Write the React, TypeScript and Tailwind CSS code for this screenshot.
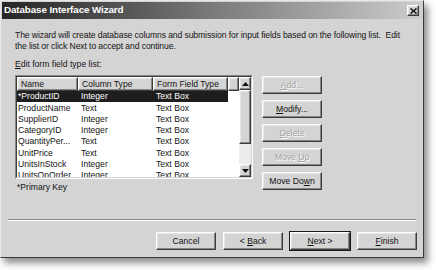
import type { ReactNode } from "react";

const rows = [
  ["*ProductID", "Integer", "Text Box"],
  ["ProductName", "Text", "Text Box"],
  ["SupplierID", "Integer", "Text Box"],
  ["CategoryID", "Integer", "Text Box"],
  ["QuantityPer...", "Text", "Text Box"],
  ["UnitPrice", "Text", "Text Box"],
  ["UnitsInStock", "Integer", "Text Box"],
  ["UnitsOnOrder", "Integer", "Text Box"],
];

const raised =
  "border border-t-white border-l-white border-r-[#3c3c3c] border-b-[#3c3c3c] shadow-[inset_-1px_-1px_0_#858585,inset_1px_1px_0_#e6e6e6]";

const Button = ({
  children,
  disabled,
  isDefault,
}: {
  children: ReactNode;
  disabled?: boolean;
  isDefault?: boolean;
}) => (
  <div
    className={`w-[60px] h-[18px] bg-[#d4d4d4] flex items-center justify-center ${
      isDefault ? "outline outline-1 outline-[#1a1a1a]" : ""
    } ${raised} ${
      disabled ? "text-[#a3a3a3] [text-shadow:1px_1px_0_#ffffff]" : "text-[#111]"
    }`}
  >
    {children}
  </div>
);

const HeaderCell = ({ children, w }: { children?: ReactNode; w: string }) => (
  <div className={`${w} h-[14px] bg-[#d4d4d4] flex items-center pl-[3px] ${raised}`}>
    {children}
  </div>
);

const Arrow = ({ up }: { up?: boolean }) => (
  <div className={`h-[13px] bg-[#d4d4d4] flex items-center justify-center ${raised}`}>
    <svg width="7" height="4" viewBox="0 0 7 4">
      {up ? <polygon points="3.5,0 7,4 0,4" fill="#111" /> : <polygon points="0,0 7,0 3.5,4" fill="#111" />}
    </svg>
  </div>
);

export default function App() {
  return (
    <div className="w-[436px] h-[270px] bg-white font-['Liberation_Sans',Arial,sans-serif] text-[8.6px] text-[#141414]">
      <div className="w-[424px] h-[258px] bg-[#d4d4d4] border border-l-[#e8e8e8] border-t-[#e8e8e8] border-r-[#3a3a3a] border-b-[#3a3a3a] shadow-[4px_5px_7px_rgba(0,0,0,0.45)] flex flex-col">
        {/* Title bar */}
        <div className="h-[17px] mx-[1px] mt-[1px] bg-gradient-to-r from-[#262626] via-[#7a7a7a] to-[#cdcdcd] flex items-center justify-between pl-[2px] pr-[3px]">
          <span className="text-white font-bold text-[9.8px] tracking-[-0.1px]">Database Interface Wizard</span>
          <div className={`w-[12px] h-[11px] bg-[#d4d4d4] flex items-center justify-center ${raised}`}>
            <svg width="7" height="6" viewBox="0 0 7 6">
              <path d="M0.5 0.5 L6.5 5.5 M6.5 0.5 L0.5 5.5" stroke="#111" strokeWidth="1.5" />
            </svg>
          </div>
        </div>

        {/* Body */}
        <div className="pl-[14px] pt-[11px]">
          <p className="leading-[11px] whitespace-nowrap tracking-[-0.1px]">
            The wizard will create database columns and submission for input fields based on the following list.&nbsp; Edit
            <br />
            the list or click Next to accept and continue.
          </p>
          <p className="mt-[7px] leading-[11px]">
            <u>E</u>dit form field type list:
          </p>

          <div className="mt-[5px] flex items-start gap-[9px]">
            <div className="flex flex-col">
              {/* List box */}
              <div className="w-[238px] h-[104px] border border-t-[#858585] border-l-[#858585] border-r-white border-b-white">
                <div className="w-full h-full border border-t-[#3c3c3c] border-l-[#3c3c3c] border-r-[#d4d4d4] border-b-[#d4d4d4] bg-white flex overflow-hidden">
                  <div className="flex-1 flex flex-col">
                    <div className="flex">
                      <HeaderCell w="w-[61px]">Name</HeaderCell>
                      <HeaderCell w="w-[75px]">Column Type</HeaderCell>
                      <HeaderCell w="w-[75px]">Form Field Type</HeaderCell>
                      <HeaderCell w="flex-1" />
                    </div>
                    {rows.map((r, i) => (
                      <div key={r[0]} className="flex h-[11.3px] items-center shrink-0">
                        <div
                          className={`flex w-[211px] h-full items-center ${
                            i === 0 ? "bg-[#1e1e1e] text-white" : ""
                          }`}
                        >
                          <span className="w-[61px] pl-[1px] whitespace-nowrap">{r[0]}</span>
                          <span className="w-[75px] pl-[3px]">{r[1]}</span>
                          <span className="w-[75px] pl-[3px]">{r[2]}</span>
                        </div>
                      </div>
                    ))}
                  </div>
                  {/* Scrollbar */}
                  <div className="w-[12px] flex flex-col bg-[#ececec]">
                    <Arrow up />
                    <div className={`h-[54px] bg-[#d4d4d4] ${raised}`} />
                    <div className="flex-1" />
                    <Arrow />
                  </div>
                </div>
              </div>
              <p className="mt-[3px] leading-[11px] pl-[2px]">*Primary Key</p>
            </div>

            {/* Side buttons */}
            <div className="flex flex-col gap-[6px] pt-[1px]">
              <Button disabled>
                <span>
                  <u>A</u>dd...
                </span>
              </Button>
              <Button>
                <span>
                  <u>M</u>odify...
                </span>
              </Button>
              <Button disabled>
                <span>
                  <u>D</u>elete
                </span>
              </Button>
              <Button disabled>
                <span>
                  Move <u>U</u>p
                </span>
              </Button>
              <Button>
                <span>
                  Move Do<u>w</u>n
                </span>
              </Button>
            </div>
          </div>
        </div>

        {/* Separator */}
        <div className="mt-auto mx-[7px] border-t border-t-[#8a8a8a] border-b border-b-white" />

        <div className="flex justify-end gap-[7px] pr-[6px] pt-[11px] pb-[7px]">
          <Button>Cancel</Button>
          <Button>
            <span>
              &lt; <u>B</u>ack
            </span>
          </Button>
          <Button isDefault>
            <span>
              <u>N</u>ext &gt;
            </span>
          </Button>
          <Button>
            <span>
              <u>F</u>inish
            </span>
          </Button>
        </div>
      </div>
    </div>
  );
}
